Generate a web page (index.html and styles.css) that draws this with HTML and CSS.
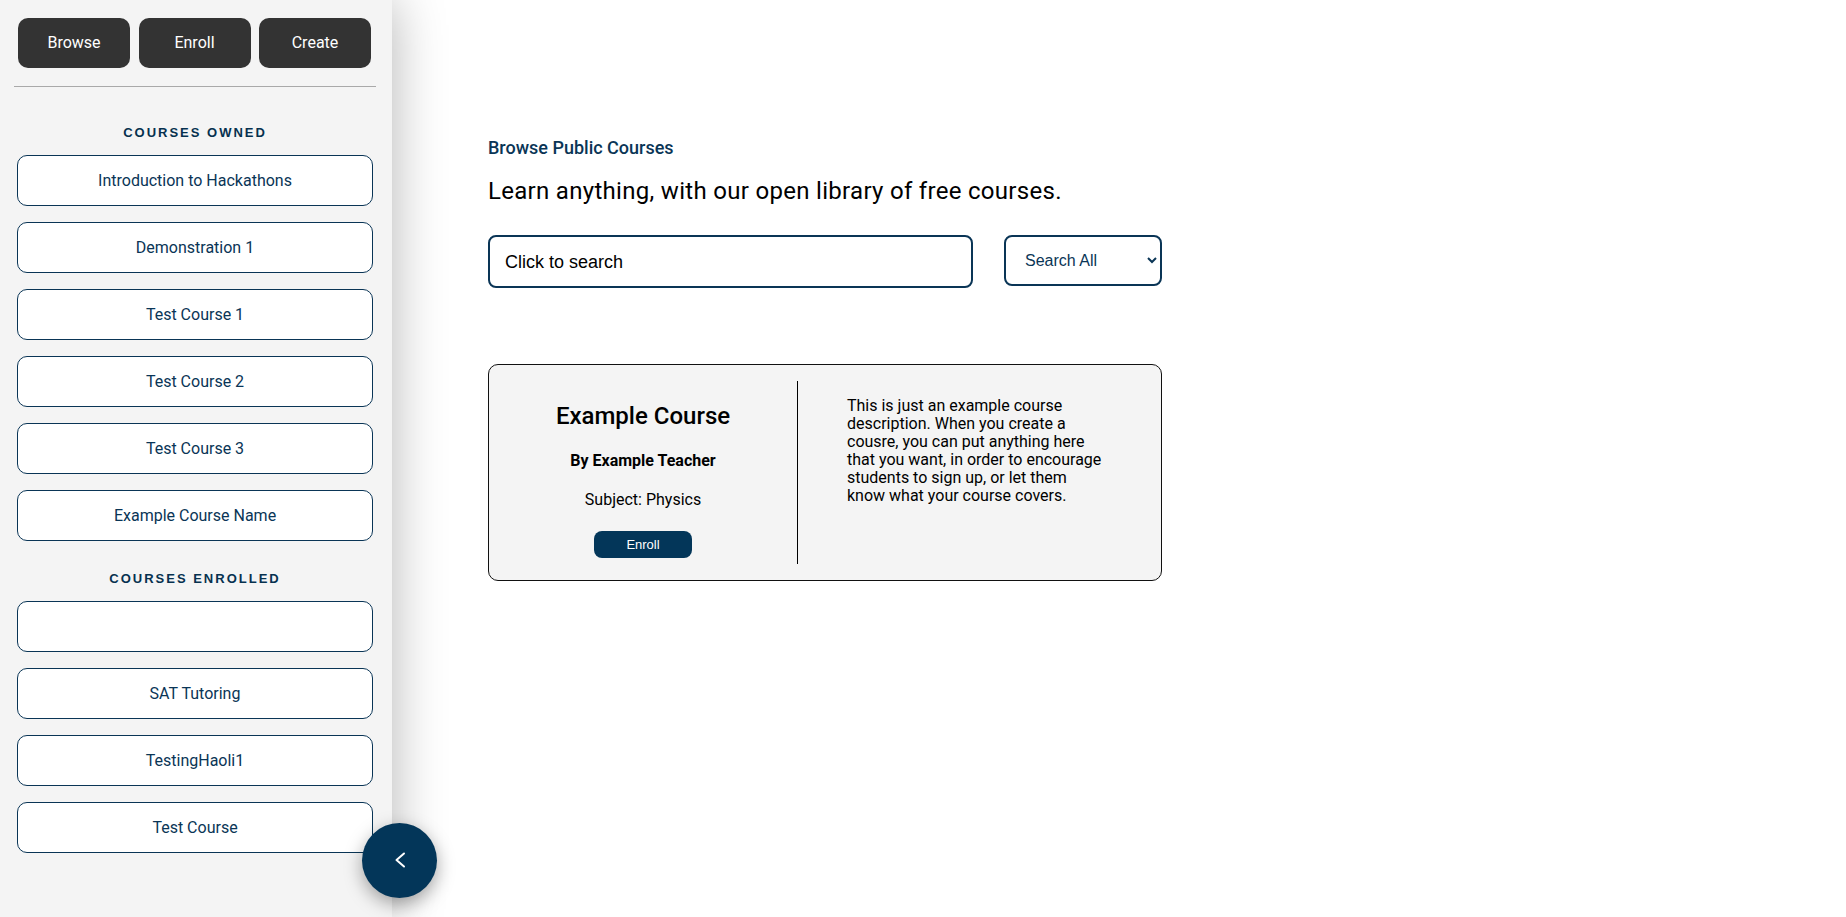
FILE: index.html
```html
<!DOCTYPE html>
<html lang="en">
<head>
<meta charset="utf-8">
<title>Browse Public Courses</title>
<link rel="stylesheet" href="styles.css">
</head>
<body>
<div class="app">
  <aside class="sidebar">
    <div class="nav-buttons">
      <button class="nav-btn">Browse</button>
      <button class="nav-btn">Enroll</button>
      <button class="nav-btn">Create</button>
    </div>
    <hr class="divider">
    <h3 class="section-title first">Courses Owned</h3>
    <ul class="course-list">
      <li class="course-item">Introduction to Hackathons</li>
      <li class="course-item">Demonstration 1</li>
      <li class="course-item">Test Course 1</li>
      <li class="course-item">Test Course 2</li>
      <li class="course-item">Test Course 3</li>
      <li class="course-item">Example Course Name</li>
    </ul>
    <h3 class="section-title">Courses Enrolled</h3>
    <ul class="course-list">
      <li class="course-item"></li>
      <li class="course-item">SAT Tutoring</li>
      <li class="course-item">TestingHaoli1</li>
      <li class="course-item">Test Course</li>
    </ul>
  </aside>

  <button class="collapse-btn" aria-label="Collapse sidebar">
    <svg width="24" height="24" viewBox="0 0 24 24" fill="none" stroke="#ffffff" stroke-width="2" stroke-linecap="round" stroke-linejoin="round"><polyline points="16 4.5 8.5 11 16 17.5"></polyline></svg>
  </button>

  <main class="main">
    <h1 class="page-title">Browse Public Courses</h1>
    <p class="page-subtitle">Learn anything, with our open library of free courses.</p>
    <div class="search-row">
      <input class="search-input" type="text" placeholder="Click to search">
      <select class="search-select">
        <option>Search All</option>
      </select>
    </div>

    <div class="course-card">
      <div class="card-info">
        <h2 class="card-title">Example Course</h2>
        <p class="card-teacher">By Example Teacher</p>
        <p class="card-subject">Subject: Physics</p>
        <button class="enroll-btn">Enroll</button>
      </div>
      <div class="card-desc">
        <p>This is just an example course<br>description. When you create a<br>cousre, you can put anything here<br>that you want, in order to encourage<br>students to sign up, or let them<br>know what your course covers.</p>
      </div>
    </div>
  </main>
</div>
</body>
</html>
```

FILE: styles.css
```css
* {
  box-sizing: border-box;
}

html, body {
  margin: 0;
  padding: 0;
  height: 100%;
  background: #ffffff;
  font-family: Roboto, "Noto Sans", sans-serif;
}

.app {
  display: flex;
  min-height: 100vh;
}

/* ---------- Sidebar ---------- */
.sidebar {
  width: 392px;
  flex: 0 0 392px;
  min-height: 917px;
  background: #f4f4f4;
  padding: 18px 16px 0 14px;
  box-shadow: 0 0 50px rgba(0, 0, 0, 0.3);
  position: relative;
  z-index: 1;
}

.nav-buttons {
  display: grid;
  grid-template-columns: 112px 112px 112px;
  column-gap: 8.5px;
  margin: 0 0 0 4px;
}

.nav-btn {
  height: 50px;
  padding: 0 0 2px 0;
  background: #333333;
  color: #ffffff;
  border: none;
  border-radius: 10px;
  font-family: Roboto, "Noto Sans", sans-serif;
  font-size: 16px;
  cursor: pointer;
}

.divider {
  border: none;
  border-top: 1px solid #a9a9a9;
  margin: 18px 0 0 0;
  height: 0;
}

.section-title {
  margin: 30px 0 14px 0;
  text-align: center;
  font-family: "Liberation Sans", Arial, sans-serif;
  font-weight: bold;
  font-size: 13px;
  line-height: 16px;
  letter-spacing: 2px;
  text-transform: uppercase;
  color: #06314f;
}

.section-title.first {
  margin-top: 38px;
}

.course-list {
  list-style: none;
  margin: 0 3px 0 3px;
  padding: 0;
  display: flex;
  flex-direction: column;
  gap: 16px;
}

.course-item {
  height: 51px;
  background: #ffffff;
  border: 1px solid #0a3556;
  border-radius: 10px;
  display: flex;
  align-items: center;
  justify-content: center;
  font-size: 16px;
  color: #0a3556;
}

.collapse-btn {
  position: absolute;
  left: 362px;
  top: 823px;
  width: 75px;
  height: 75px;
  border-radius: 50%;
  border: none;
  background: #033659;
  box-shadow: 0 6px 18px rgba(0, 0, 0, 0.35);
  display: flex;
  align-items: center;
  justify-content: center;
  padding: 0;
  z-index: 2;
  cursor: pointer;
}

/* ---------- Main ---------- */
.main {
  flex: 1;
  padding: 137px 0 0 96px;
}

.page-title {
  margin: 0;
  font-size: 18px;
  line-height: 22px;
  font-weight: 500;
  color: #0a3556;
}

.page-subtitle {
  margin: 17.5px 0 0 0;
  font-size: 24px;
  line-height: 28px;
  letter-spacing: 0.3px;
  color: #000000;
}

.search-row {
  display: flex;
  align-items: flex-start;
  gap: 31px;
  margin-top: 30px;
}

.search-input {
  width: 485px;
  height: 53px;
  border: 2px solid #0a3556;
  border-radius: 8px;
  padding: 2px 15px 0 15px;
  font-family: "Liberation Sans", Arial, sans-serif;
  font-size: 18px;
  color: #000000;
  background: #ffffff;
  outline: none;
}

.search-input::placeholder {
  color: #000000;
  opacity: 1;
}

.search-select {
  width: 158px;
  height: 51px;
  border: 2px solid #0a3556;
  border-radius: 8px;
  padding: 0 0 0 15px;
  font-family: "Liberation Sans", Arial, sans-serif;
  font-size: 16px;
  color: #0a3556;
  background: #ffffff;
}

.course-card {
  display: flex;
  width: 674px;
  height: 217px;
  margin-top: 76px;
  padding: 16px 0;
  background: #f4f4f4;
  border: 1px solid #111111;
  border-radius: 10px;
}

.card-info {
  width: 309px;
  border-right: 1px solid #000000;
  display: flex;
  flex-direction: column;
  align-items: center;
  padding-top: 21px;
}

.card-title {
  margin: 0;
  font-size: 24px;
  line-height: 28px;
  font-weight: 500;
  color: #000000;
}

.card-teacher {
  margin: 21.5px 0 0 0;
  font-size: 16px;
  line-height: 20px;
  font-weight: bold;
  color: #000000;
}

.card-subject {
  margin: 19px 0 0 0;
  font-size: 16px;
  line-height: 20px;
  color: #000000;
}

.enroll-btn {
  margin-top: 20.5px;
  width: 98px;
  height: 27px;
  border: none;
  border-radius: 8px;
  background: #033659;
  color: #ffffff;
  font-family: "Liberation Sans", Arial, sans-serif;
  font-size: 13px;
  padding: 0;
  cursor: pointer;
}

.card-desc {
  padding: 16.5px 0 0 49px;
}

.card-desc p {
  margin: 0;
  font-size: 16px;
  line-height: 18px;
  color: #000000;
}
```
